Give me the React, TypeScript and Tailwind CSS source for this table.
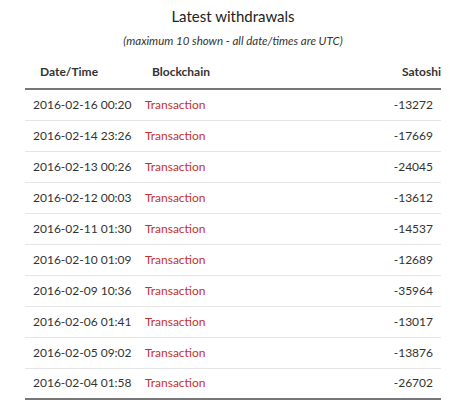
import React from "react";

const rows = [
  { date: "2016-02-16 00:20", amount: "-13272" },
  { date: "2016-02-14 23:26", amount: "-17669" },
  { date: "2016-02-13 00:26", amount: "-24045" },
  { date: "2016-02-12 00:03", amount: "-13612" },
  { date: "2016-02-11 01:30", amount: "-14537" },
  { date: "2016-02-10 01:09", amount: "-12689" },
  { date: "2016-02-09 10:36", amount: "-35964" },
  { date: "2016-02-06 01:41", amount: "-13017" },
  { date: "2016-02-05 09:02", amount: "-13876" },
  { date: "2016-02-04 01:58", amount: "-26702" },
];

const App = () => {
  return (
    <div className="w-[450px] h-[400px] bg-white text-[#333] font-['Lato',sans-serif] overflow-hidden">
      <div className="ml-[25px] w-[416px]">
        <h2 className="pt-[5px] text-center text-[15px] leading-[22px] text-[#222]">
          Latest withdrawals
        </h2>
        <p className="mt-[7px] text-center text-[11.5px] leading-[14px] italic text-[#333]">
          (maximum 10 shown - all date/times are UTC)
        </p>
        <table className="mt-[8px] w-full table-fixed border-collapse text-[12px] whitespace-nowrap">
          <thead>
            <tr className="border-b-2 border-[#777]">
              <th className="h-[33px] w-[112px] pl-[15px] text-left font-bold">Date/Time</th>
              <th className="w-[200px] pl-[15px] text-left font-bold">Blockchain</th>
              <th className="pr-0 text-right font-bold">Satoshi</th>
            </tr>
          </thead>
          <tbody>
            {rows.map((r, i) => (
              <tr
                key={r.date}
                className={i === rows.length - 1 ? "border-b-2 border-[#777]" : "border-b border-[#e6e6e6]"}
              >
                <td className="h-[31px] px-2">{r.date}</td>
                <td className="px-2 text-[#c9302c]">Transaction</td>
                <td className="px-2 text-right">{r.amount}</td>
              </tr>
            ))}
          </tbody>
        </table>
      </div>
    </div>
  );
};

export default App;
